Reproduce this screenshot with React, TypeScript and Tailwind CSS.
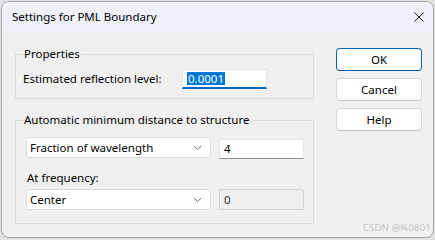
import React from "react";

const font = { fontFamily: '"Noto Sans", "Open Sans", sans-serif' };

function Chevron() {
  return (
    <svg width="9" height="6" viewBox="0 0 9 6" className="shrink-0">
      <path d="M0.8 1 L4.5 4.6 L8.2 1" fill="none" stroke="#6b6b6b" strokeWidth="1" />
    </svg>
  );
}

function Select({ value }: { value: string }) {
  return (
    <div className="w-[185px] h-[21px] bg-white border border-[#dadada] rounded-[3px] flex items-center justify-between pl-[3px] pr-[8px] text-[11.5px] text-black">
      <span>{value}</span>
      <Chevron />
    </div>
  );
}

function Btn({ label, primary }: { label: string; primary?: boolean }) {
  return (
    <div
      className={
        "w-[86px] h-[23px] rounded-[4px] flex items-center justify-center text-[11.5px] text-black " +
        (primary
          ? "bg-[#fdfdfd] border border-[#0067c0] border-b-[#005aa8]"
          : "bg-[#fdfdfd] border border-[#d6d6d6] border-b-[#c2c2c2]")
      }
    >
      {label}
    </div>
  );
}

export default function App() {
  return (
    <div className="w-[435px] h-[240px] bg-[#e2e2e2] p-[1px]" style={font}>
      <div className="relative w-[433px] h-[237px] rounded-[8px] border border-[#a3a3a3] bg-[#f0f0f0] overflow-hidden flex flex-col">
        {/* title bar */}
        <div className="h-[30px] bg-[#eff0f8] flex items-center justify-between pl-[10px] pr-[9px] shrink-0">
          <span className="text-[11.5px] text-black">Settings for PML Boundary</span>
          <svg width="10" height="10" viewBox="0 0 10 10">
            <path d="M0.5 0.5 L9.5 9.5 M9.5 0.5 L0.5 9.5" stroke="#1a1a1a" strokeWidth="1" />
          </svg>
        </div>
        {/* body */}
        <div className="flex flex-1">
          <div className="pl-[13px] pt-[14px] flex flex-col gap-[13px]">
            <fieldset className="w-[299px] border border-[#dcdcdc] pl-[7px] pr-[8px] pt-[7px] pb-[9px] m-0">
              <legend className="px-[1px] text-[11.5px] leading-[16px] text-black">Properties</legend>
              <div className="flex items-center h-[20px] text-[11.5px] text-black">
                <span className="w-[159px]">Estimated reflection level:</span>
                <div className="w-[85px] h-[20px] bg-white border border-[#e4e4e4] border-b-2 border-b-[#0067c0] flex items-center pl-[4px]">
                  <span className="bg-[#0078d7] text-white leading-[13px] px-[1px]">0.0001</span>
                </div>
              </div>
            </fieldset>
            <fieldset className="w-[299px] border border-[#dcdcdc] pl-[10px] pr-[9px] pt-[9px] pb-[13px] m-0">
              <legend className="ml-[-3px] px-[1px] text-[11.5px] leading-[16px] text-black">
                Automatic minimum distance to structure
              </legend>
              <div className="flex items-start gap-[8px]">
                <Select value="Fraction of wavelength" />
                <div className="mt-[2px] w-[85px] h-[20px] bg-white border border-[#e6e6e6] border-b-[#8a8a8a] flex items-center pl-[4px] text-[11.5px] text-black">
                  4
                </div>
              </div>
              <div className="mt-[11px] mb-[3px] h-[16px] leading-[16px] text-[11.5px] text-black pl-[1px]">At frequency:</div>
              <div className="flex items-start gap-[8px]">
                <Select value="Center" />
                <div className="w-[85px] h-[21px] bg-[#efefef] border border-[#d4d4d4] rounded-[2px] flex items-center pl-[4px] text-[11.5px] text-[#333]">
                  0
                </div>
              </div>
            </fieldset>
          </div>
          <div className="pl-[22px] pt-[16px] flex flex-col gap-[7px]">
            <Btn label="OK" primary />
            <Btn label="Cancel" />
            <Btn label="Help" />
          </div>
        </div>
        <span className="absolute right-[2px] bottom-[4px] text-[9.5px] leading-[10px] text-[#c4c4c4] tracking-[0.2px]">
          CSDN @%0801
        </span>
      </div>
    </div>
  );
}
